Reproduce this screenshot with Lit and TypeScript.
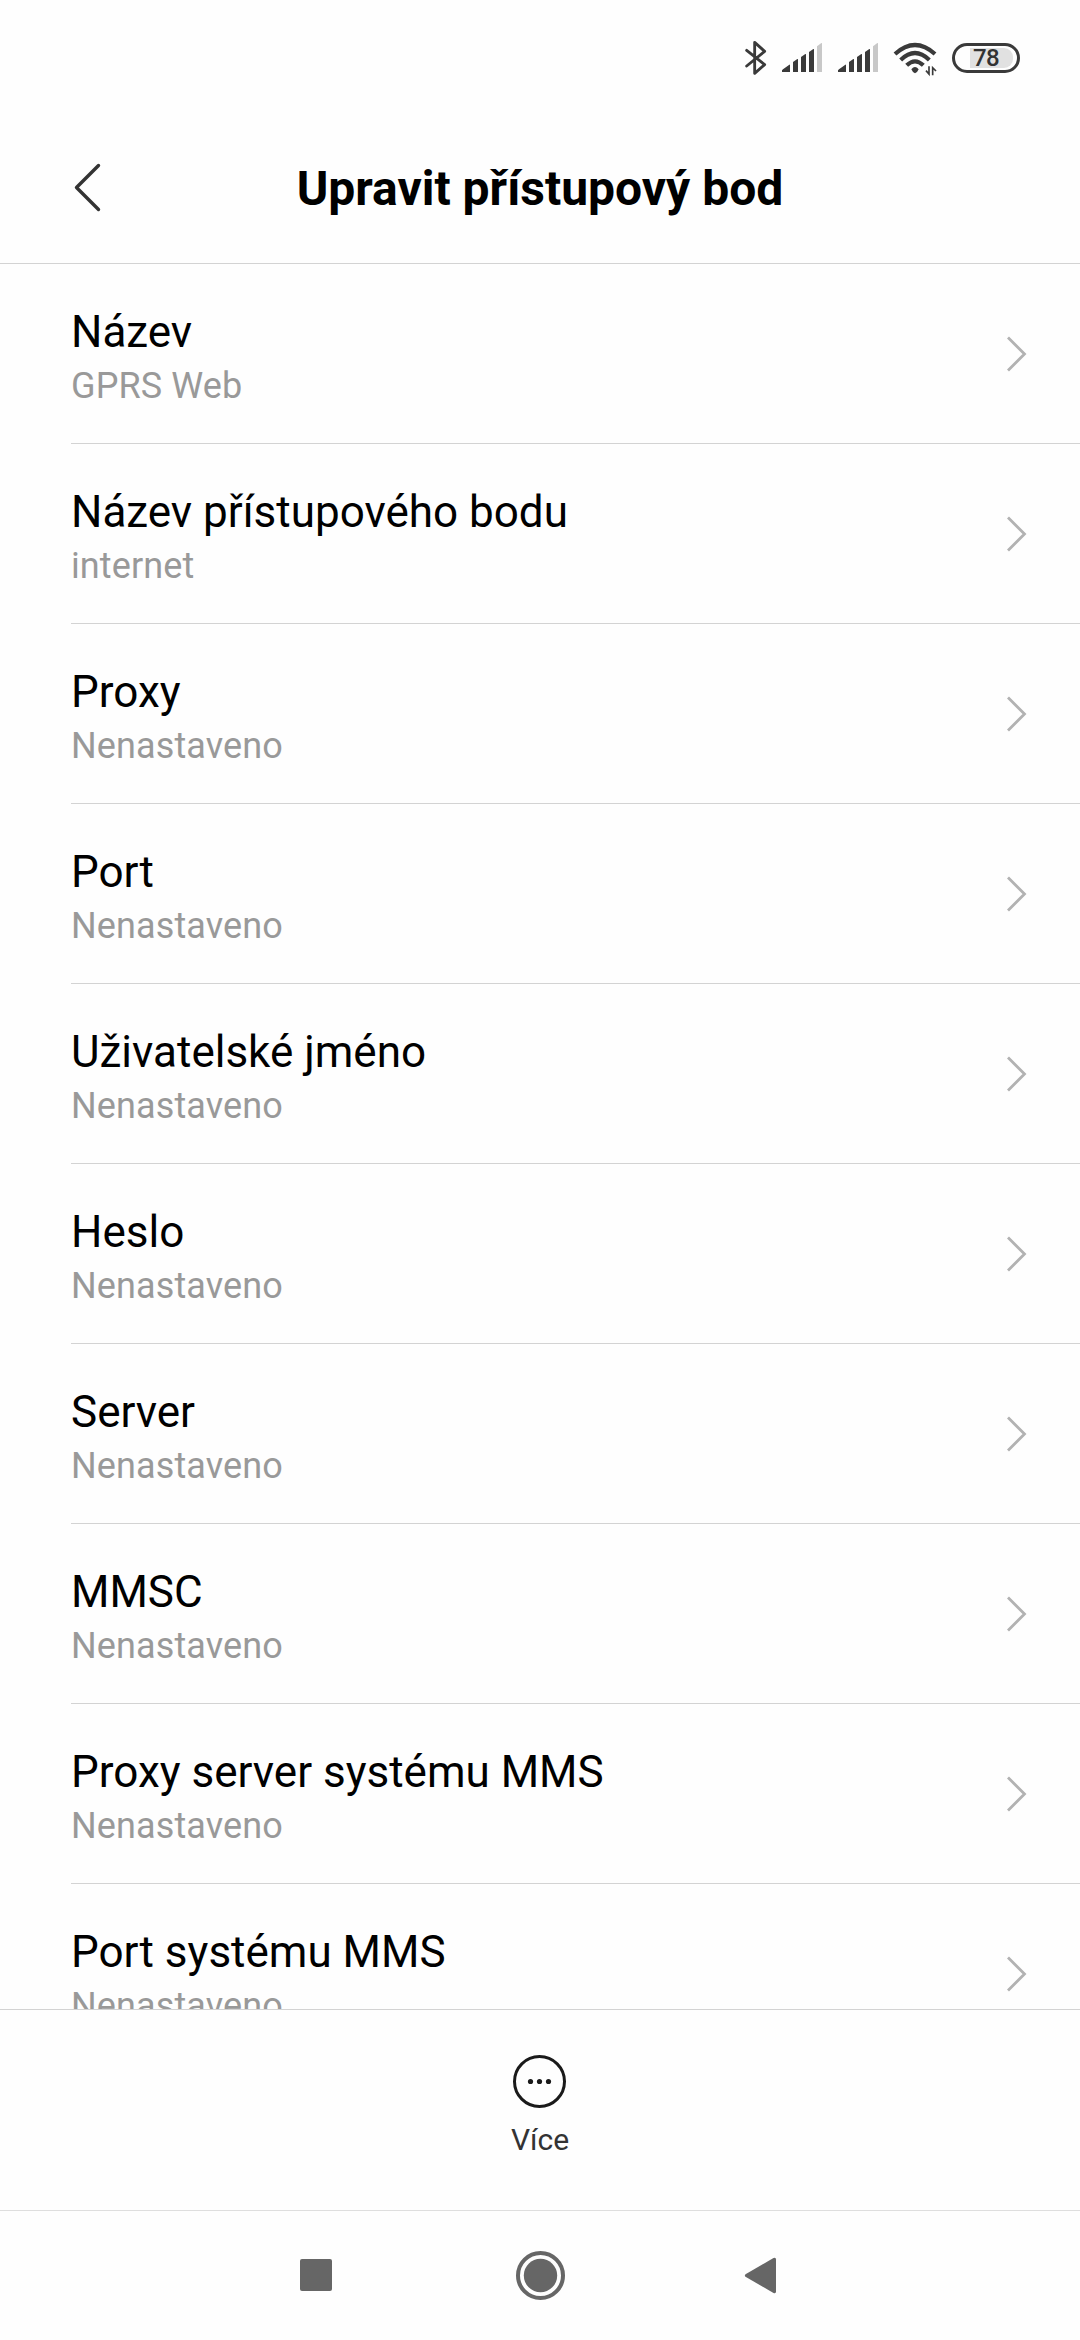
import { LitElement, html, css, svg } from "lit";
import { customElement, property } from "lit/decorators.js";

interface Setting {
  title: string;
  value: string;
}

const UNSET = "Nenastaveno";

const SETTINGS: Setting[] = [
  { title: "Název", value: "GPRS Web" },
  { title: "Název přístupového bodu", value: "internet" },
  { title: "Proxy", value: UNSET },
  { title: "Port", value: UNSET },
  { title: "Uživatelské jméno", value: UNSET },
  { title: "Heslo", value: UNSET },
  { title: "Server", value: UNSET },
  { title: "MMSC", value: UNSET },
  { title: "Proxy server systému MMS", value: UNSET },
  { title: "Port systému MMS", value: UNSET },
];

const signalBars = svg`
  <path fill="#3a3a3a" d="M156 126v-5l3-3 19-14q2-1 2 2v20zM189 126v-30l13-9q2-1 2 2v37zM213 126v-45l13-9q2-1 2 2v52zM237 126v-60l13-9q2-1 2 2v67z"/>
  <path fill="#c8c8c8" d="M261 126v-77l13-10q2-1 2 2v85z"/>`;

@customElement("status-bar")
export class StatusBar extends LitElement {
  @property({ type: Number }) level = 78;

  static styles = css`
    :host {
      display: flex;
      align-items: flex-start;
      justify-content: flex-end;
      height: 120px;
      padding: 30px 60px 0 0;
      box-sizing: border-box;
    }
    svg { display: block; flex: none; }
    .bluetooth { margin-right: 13px; }
    .signal { margin-right: 14px; }
    .signal.second { margin-right: 13px; }
    .wifi { margin-right: 14px; }
    .battery {
      display: flex;
      align-items: center;
      width: 68px;
      height: 30px;
      margin-top: 13px;
      padding: 0 3px 0 15px;
      border: 3px solid #3a3a3a;
      border-radius: 15px;
      box-sizing: border-box;
    }
    .charge {
      display: flex;
      align-items: center;
      width: 43px;
      height: 20px;
      padding-left: 3px;
      border-radius: 0 9px 9px 0;
      background: #e1e1e1;
      color: #333;
      font-size: 24px;
      font-weight: 500;
      letter-spacing: -0.6px;
      line-height: 20px;
      box-sizing: border-box;
    }
  `;

  render() {
    return html`
      <svg class="bluetooth" width="24" height="60" viewBox="42 0 72 180">
        <path d="M50 61L104 104L74 130V37L104 64L50 108" fill="none" stroke="#3a3a3a" stroke-width="8.5" stroke-linejoin="round" stroke-linecap="round"/>
      </svg>
      <svg class="signal" width="42" height="60" viewBox="153 0 126 180">${signalBars}</svg>
      <svg class="signal second" width="42" height="60" viewBox="153 0 126 180">${signalBars}</svg>
      <svg class="wifi" width="46" height="60" viewBox="36 0 138 180">
        <g fill="none" stroke="#3a3a3a" stroke-width="12.5" stroke-linecap="butt">
          <path d="M45 72Q105 18 165 72"/>
          <path d="M62 90Q105 48 148 90"/>
          <path d="M80 106Q105 82 130 106"/>
        </g>
        <path d="M94 118Q105 104 116 118Q113 126 105 130Q97 126 94 118Z" fill="#3a3a3a"/>
        <path d="M138 122L147 132V109M158 136V113L168 123" fill="none" stroke="#3a3a3a" stroke-width="5"/>
      </svg>
      <div class="battery"><div class="charge">${this.level}</div></div>
    `;
  }
}

@customElement("setting-row")
export class SettingRow extends LitElement {
  @property() heading = "";
  @property() value = "";

  static styles = css`
    :host { display: block; flex: none; height: 180px; padding-left: 71px; box-sizing: border-box; }
    .row {
      display: flex;
      justify-content: space-between;
      align-items: flex-start;
      height: 180px;
      padding-right: 53px;
      border-bottom: 1px solid #d3d3d3;
      box-sizing: border-box;
    }
    .text { padding-top: 42px; white-space: nowrap; }
    .title { font-size: 44px; line-height: 52px; color: #000; }
    .value { margin-top: 7px; font-size: 36px; line-height: 42px; letter-spacing: 0.12px; color: #999; }
    svg { display: block; margin-top: 70px; }
  `;

  render() {
    return html`
      <div class="row">
        <div class="text">
          <div class="title">${this.heading}</div>
          <div class="value">${this.value}</div>
        </div>
        <svg width="20" height="40" viewBox="0 0 20 40">
          <path d="M1 3.5L17.500 20L1 36.5" fill="none" stroke="#b2b2b2" stroke-width="2.8"/>
        </svg>
      </div>
    `;
  }
}

@customElement("app-root")
export class AppRoot extends LitElement {
  static styles = css`
    :host {
      display: flex;
      flex-direction: column;
      height: 2340px;
      overflow: hidden;
      background: #fefefe;
      font-family: Roboto, "Noto Sans", sans-serif;
    }
    .header {
      display: grid;
      grid-template-columns: 120px 1fr 120px;
      height: 144px;
      flex: none;
      border-bottom: 1px solid #d3d3d3;
      box-sizing: border-box;
    }
    .back { display: block; margin: 40px 0 0 70px; }
    h1 {
      margin: 41px 0 0;
      color: #000;
      font-size: 48px;
      font-weight: 700;
      line-height: 56px;
      text-align: center;
      white-space: nowrap;
    }
    .list {
      display: flex;
      flex-direction: column;
      height: 1745px;
      flex: none;
      overflow: hidden;
    }
    .toolbar {
      display: flex;
      flex-direction: column;
      align-items: center;
      height: 201px;
      flex: none;
      padding-top: 44px;
      border-top: 1px solid #d3d3d3;
      box-sizing: border-box;
    }
    .more { display: block; }
    .label { margin-top: 12px; font-size: 30px; line-height: 36px; color: #333; }
    .nav {
      display: flex;
      justify-content: center;
      flex: 1;
      padding-top: 38px;
      border-top: 1px solid #dedede;
      box-sizing: border-box;
    }
    .nav svg { display: block; margin: 0 80px; }
  `;

  render() {
    return html`
      <status-bar></status-bar>
      <div class="header">
        <svg class="back" width="36" height="56" viewBox="0 0 36 56">
          <path d="M28.5 5.5L6.5 27.5L28.5 49.5" fill="none" stroke="#333" stroke-width="3.4" stroke-linecap="round" stroke-linejoin="round"/>
        </svg>
        <h1>Upravit přístupový bod</h1>
      </div>
      <div class="list">
        ${SETTINGS.map((s) => html`<setting-row .heading=${s.title} .value=${s.value}></setting-row>`)}
      </div>
      <div class="toolbar">
        <svg class="more" width="56" height="56" viewBox="0 0 56 56">
          <circle cx="27.5" cy="27.5" r="25" fill="none" stroke="#1a1a1a" stroke-width="3"/>
          <g fill="#1a1a1a"><circle cx="18.5" cy="27.5" r="2.6"/><circle cx="27.5" cy="27.5" r="2.6"/><circle cx="36.5" cy="27.5" r="2.6"/></g>
        </svg>
        <div class="label">Více</div>
      </div>
      <div class="nav">
        <svg width="60" height="60" viewBox="0 0 60 60">
          <rect x="10" y="10" width="32" height="32" rx="2" fill="#666"/>
        </svg>
        <svg width="60" height="60" viewBox="0 0 60 60">
          <circle cx="30.5" cy="26.5" r="22.5" fill="none" stroke="#666" stroke-width="4"/>
          <circle cx="30.5" cy="26.5" r="16.7" fill="#666"/>
        </svg>
        <svg width="60" height="60" viewBox="0 0 60 60">
          <path d="M15.5 25.2L43.5 9Q46 8 46 10.500V42.500Q46 45 43.500 44L15.500 27.800Q14.200 26.500 15.500 25.200Z" fill="#666"/>
        </svg>
      </div>
    `;
  }
}
